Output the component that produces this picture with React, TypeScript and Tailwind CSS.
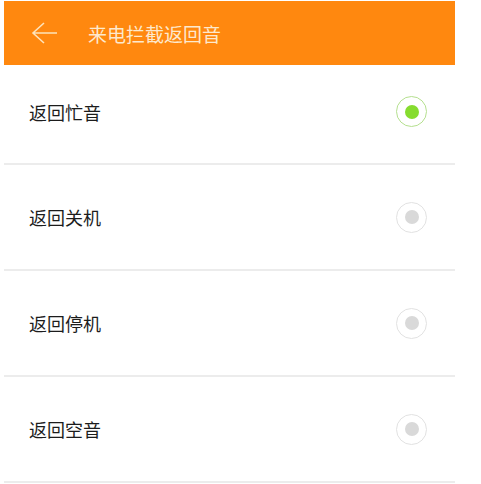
const options = [
  { label: "返回忙音", checked: true },
  { label: "返回关机", checked: false },
  { label: "返回停机", checked: false },
  { label: "返回空音", checked: false },
]

function Radio({ checked }: { checked: boolean }) {
  return (
    <div
      className={`flex h-[31px] w-[31px] items-center justify-center rounded-full border-[1.5px] ${
        checked ? "border-[#b5e08f]" : "border-[#e2e2e2]"
      }`}
    >
      <div className={`h-[14px] w-[14px] rounded-full ${checked ? "bg-[#86dc2f]" : "bg-[#d9d9d9]"}`} />
    </div>
  )
}

export default function App() {
  return (
    <div className="h-[484px] w-[481px] overflow-hidden bg-white font-['Noto_Sans_CJK_SC',sans-serif]">
      <div className="ml-1 w-[451px] pt-px">
        {/* Header */}
        <div className="flex h-16 items-center bg-[#ff880f]">
          <svg width="27" height="22" viewBox="0 0 27 22" className="ml-[27px]" fill="none">
            <path d="M26 11H2M13 1L2 11l11 10" stroke="#fde3bb" strokeWidth="1.6" />
          </svg>
          <span className="ml-[30px] text-[19px] leading-none text-[#fde9cd]">来电拦截返回音</span>
        </div>

        {/* Options */}
        {options.map((o, i) => (
          <div
            key={o.label}
            className={`flex items-center justify-between border-b-2 border-[#ececec] pl-[25px] pr-[28px] ${
              i === 0 ? "h-[100px] pb-[5px]" : "h-[106px]"
            }`}
          >
            <span className="text-[18px] leading-none text-[#1c1c1c]">{o.label}</span>
            <Radio checked={o.checked} />
          </div>
        ))}
      </div>
    </div>
  )
}
